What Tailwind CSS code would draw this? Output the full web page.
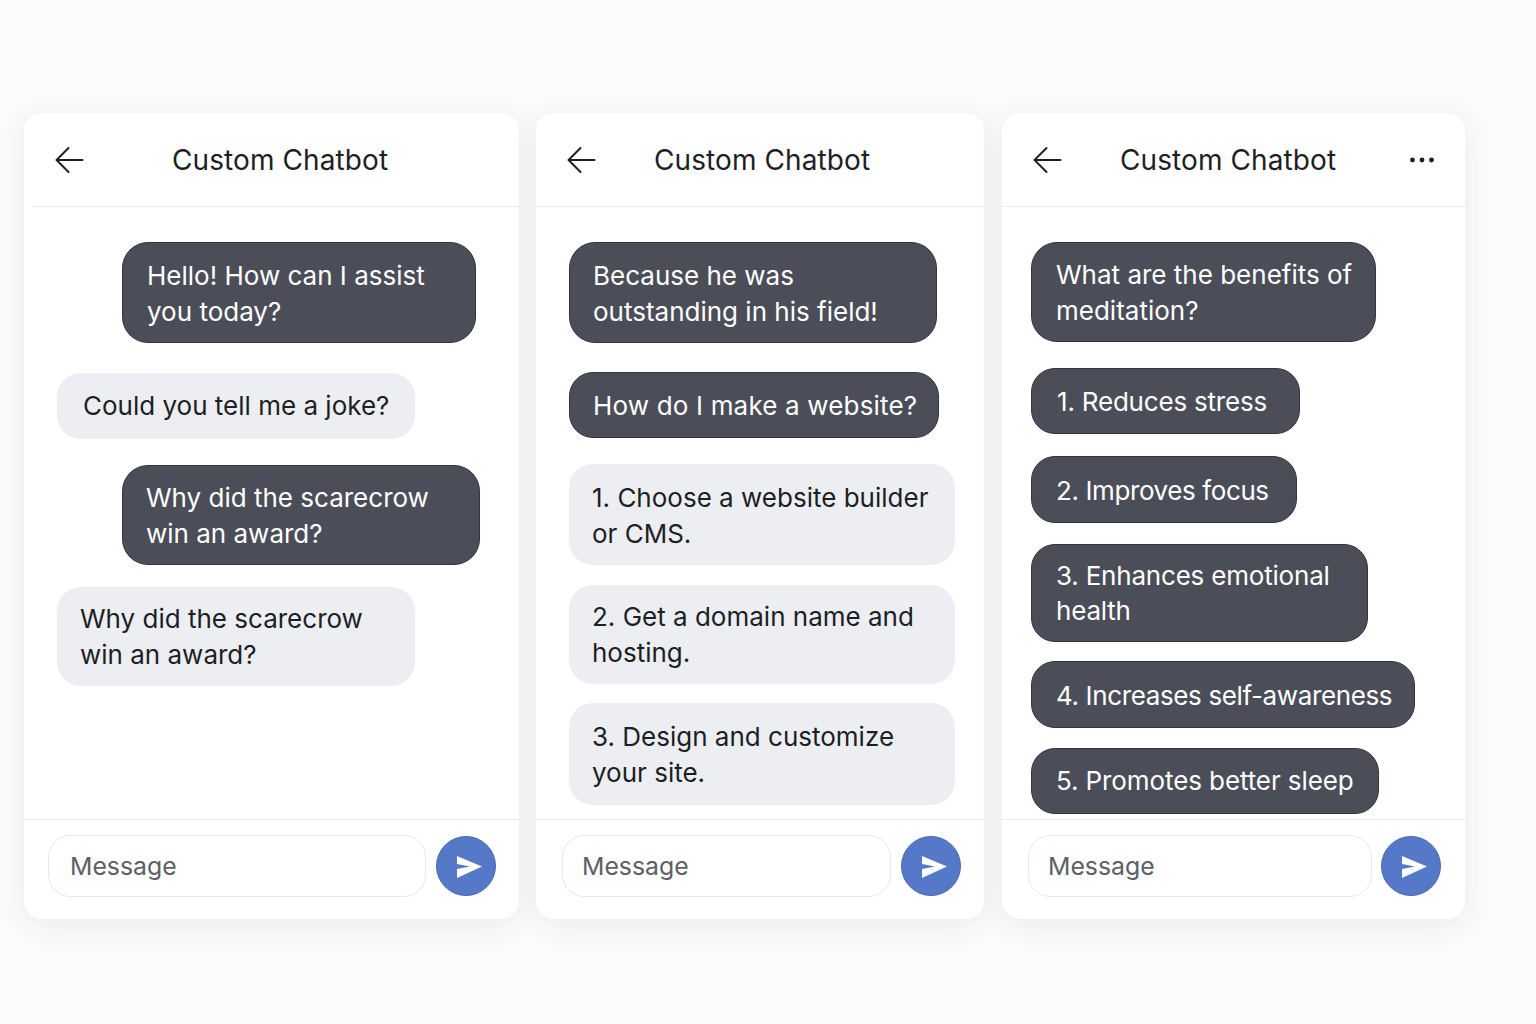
<!DOCTYPE html>
<html lang="en">
<head>
    <meta charset="UTF-8">
    <meta name="viewport" content="width=device-width, initial-scale=1.0">
    <title>Custom Chatbot</title>
    <script src="https://cdn.jsdelivr.net/npm/@tailwindcss/browser@4"></script>
</head>
<body class="bg-[#fbfbfc] h-screen overflow-hidden font-['Inter',sans-serif] text-[26px] leading-[36px] text-[#1d1f24]">
<div class="flex gap-[17px] pl-[24px] pt-[113px]">

    <!-- first chat -->
    <section class="w-[495px] h-[806px] flex flex-col bg-white rounded-[18px] shadow-[0_6px_28px_rgba(40,45,60,0.08)] overflow-hidden">
        <header class="h-[94px] shrink-0 flex items-center ml-[8px] border-b border-[#ebecee] pl-[23px]">
            <svg class="w-[30px] h-[28px] shrink-0" viewBox="0 0 30 28" fill="none" stroke="#1d1f24" stroke-width="2" stroke-linecap="round" stroke-linejoin="round"><path d="M27.500 14H1.500M13.500 2L1.500 14L13.500 26"/></svg>
            <h1 class="ml-[87px] text-[28px] tracking-[0.1px]">Custom Chatbot</h1>
        </header>
        <div class="flex-1 min-h-0 overflow-hidden flex flex-col items-start pt-[35px]">
            <div class="ml-[98px] w-[354px] h-[101px] pl-[24px] pt-[2px] flex items-center bg-[#4b4e58] border border-[#33353d] rounded-[26px] text-white"><p>Hello! How can I assist<br>you today?</p></div>
            <div class="ml-[33px] mt-[30px] w-[358px] h-[66px] pl-[26px] flex items-center bg-[#eceef2] rounded-[24px]"><p>Could you tell me a joke?</p></div>
            <div class="ml-[98px] mt-[26px] w-[358px] h-[100px] pl-[23px] pt-[2px] flex items-center bg-[#4b4e58] border border-[#33353d] rounded-[26px] text-white"><p>Why did the scarecrow<br>win an award?</p></div>
            <div class="ml-[33px] mt-[22px] w-[358px] h-[99px] pl-[23px] flex items-center bg-[#eceef2] rounded-[24px]"><p>Why did the scarecrow<br>win an award?</p></div>
        </div>
        <footer class="h-[100px] shrink-0 flex items-start gap-[10px] border-t border-[#ebecee] pl-[24px] pt-[15px]">
            <input class="w-[378px] h-[62px] px-[21px] bg-white border border-[#e6e7ea] rounded-[22px] text-[24.8px] placeholder:text-[#5d6066]" placeholder="Message">
            <button class="w-[60px] h-[60px] mt-[1px] shrink-0 rounded-full bg-[#5578c8] border border-[#4668b5]">
                <svg class="w-full h-full" viewBox="0 0 58 58" fill="#fff"><path d="M20 19L45 29.500L20 41L20 32L33 29.500L20 27Z"/></svg>
            </button>
        </footer>
    </section>

    <!-- second chat -->
    <section class="w-[448px] h-[806px] flex flex-col bg-white rounded-[18px] shadow-[0_6px_28px_rgba(40,45,60,0.08)] overflow-hidden">
        <header class="h-[94px] shrink-0 flex items-center border-b border-[#ebecee] pl-[31px]">
            <svg class="w-[30px] h-[28px] shrink-0" viewBox="0 0 30 28" fill="none" stroke="#1d1f24" stroke-width="2" stroke-linecap="round" stroke-linejoin="round"><path d="M27.500 14H1.500M13.500 2L1.500 14L13.500 26"/></svg>
            <h1 class="ml-[57px] text-[28px] tracking-[0.1px]">Custom Chatbot</h1>
        </header>
        <div class="flex-1 min-h-0 overflow-hidden flex flex-col items-start pt-[35px] pl-[33px]">
            <div class="w-[368px] h-[101px] pl-[23px] pt-[2px] flex items-center bg-[#4b4e58] border border-[#33353d] rounded-[26px] text-white"><p>Because he was<br>outstanding in his field!</p></div>
            <div class="mt-[29px] w-[370px] h-[66px] pl-[23px] pt-[2px] flex items-center bg-[#4b4e58] border border-[#33353d] rounded-[24px] text-white"><p class="tracking-[0.17px]">How do I make a website?</p></div>
            <div class="mt-[26px] w-[386px] h-[101px] pl-[23px] pt-[2px] flex items-center bg-[#eceef2] rounded-[24px]"><p>1. Choose a website builder<br>or CMS.</p></div>
            <div class="mt-[20px] w-[386px] h-[99px] pl-[23px] flex items-center bg-[#eceef2] rounded-[24px]"><p>2. Get a domain name and<br>hosting.</p></div>
            <div class="mt-[19px] w-[386px] h-[102px] pl-[23px] pt-[2px] flex items-center bg-[#eceef2] rounded-[24px]"><p>3. Design and customize<br>your site.</p></div>
        </div>
        <footer class="h-[100px] shrink-0 flex items-start gap-[10px] border-t border-[#ebecee] pl-[26px] pt-[15px]">
            <input class="w-[329px] h-[62px] px-[19px] bg-white border border-[#e6e7ea] rounded-[22px] text-[24.8px] placeholder:text-[#5d6066]" placeholder="Message">
            <button class="w-[60px] h-[60px] mt-[1px] shrink-0 rounded-full bg-[#5578c8] border border-[#4668b5]">
                <svg class="w-full h-full" viewBox="0 0 58 58" fill="#fff"><path d="M20 19L45 29.500L20 41L20 32L33 29.500L20 27Z"/></svg>
            </button>
        </footer>
    </section>

    <!-- third chat -->
    <section class="ml-[1px] w-[463px] h-[806px] flex flex-col bg-white rounded-[18px] shadow-[0_6px_28px_rgba(40,45,60,0.08)] overflow-hidden">
        <header class="h-[94px] shrink-0 flex items-center border-b border-[#ebecee] pl-[31px]">
            <svg class="w-[30px] h-[28px] shrink-0" viewBox="0 0 30 28" fill="none" stroke="#1d1f24" stroke-width="2" stroke-linecap="round" stroke-linejoin="round"><path d="M27.500 14H1.500M13.500 2L1.500 14L13.500 26"/></svg>
            <h1 class="ml-[57px] text-[28px] tracking-[0.1px]">Custom Chatbot</h1>
            <svg class="ml-[73px] w-[26px] h-[8px] shrink-0" viewBox="0 0 26 8" fill="#1d1f24"><circle cx="3.500" cy="4" r="2.400"/><circle cx="13" cy="4" r="2.400"/><circle cx="22.500" cy="4" r="2.400"/></svg>
        </header>
        <div class="flex-1 min-h-0 overflow-hidden flex flex-col items-start pt-[35px] pl-[29px]">
            <div class="w-[345px] h-[100px] pl-[24px] pt-[2px] flex items-center bg-[#4b4e58] border border-[#33353d] rounded-[26px] text-white"><p>What are the benefits of<br>meditation?</p></div>
            <div class="mt-[26px] w-[269px] h-[66px] pl-[25px] pt-[2px] flex items-center bg-[#4b4e58] border border-[#33353d] rounded-[24px] text-white"><p class="tracking-[-0.2px]">1. Reduces stress</p></div>
            <div class="mt-[22px] w-[266px] h-[67px] pl-[24px] pt-[2px] flex items-center bg-[#4b4e58] border border-[#33353d] rounded-[24px] text-white"><p class="tracking-[-0.4px]">2. Improves focus</p></div>
            <div class="mt-[21px] w-[337px] h-[98px] pl-[24px] flex items-center bg-[#4b4e58] border border-[#33353d] rounded-[24px] text-white"><p class="leading-[35px] tracking-[-0.2px]">3. Enhances emotional<br>health</p></div>
            <div class="mt-[19px] w-[384px] h-[67px] pl-[24px] pt-[2px] flex items-center bg-[#4b4e58] border border-[#33353d] rounded-[24px] text-white"><p class="tracking-[-0.37px]">4. Increases self-awareness</p></div>
            <div class="mt-[20px] w-[348px] h-[66px] pl-[24px] flex items-center bg-[#4b4e58] border border-[#33353d] rounded-[24px] text-white"><p class="tracking-[-0.1px]">5. Promotes better sleep</p></div>
        </div>
        <footer class="h-[100px] shrink-0 flex items-start gap-[9px] border-t border-[#ebecee] pl-[26px] pt-[15px]">
            <input class="w-[344px] h-[62px] px-[19px] bg-white border border-[#e6e7ea] rounded-[22px] text-[24.8px] placeholder:text-[#5d6066]" placeholder="Message">
            <button class="w-[60px] h-[60px] mt-[1px] shrink-0 rounded-full bg-[#5578c8] border border-[#4668b5]">
                <svg class="w-full h-full" viewBox="0 0 58 58" fill="#fff"><path d="M20 19L45 29.500L20 41L20 32L33 29.500L20 27Z"/></svg>
            </button>
        </footer>
    </section>

</div>
</body>
</html>
